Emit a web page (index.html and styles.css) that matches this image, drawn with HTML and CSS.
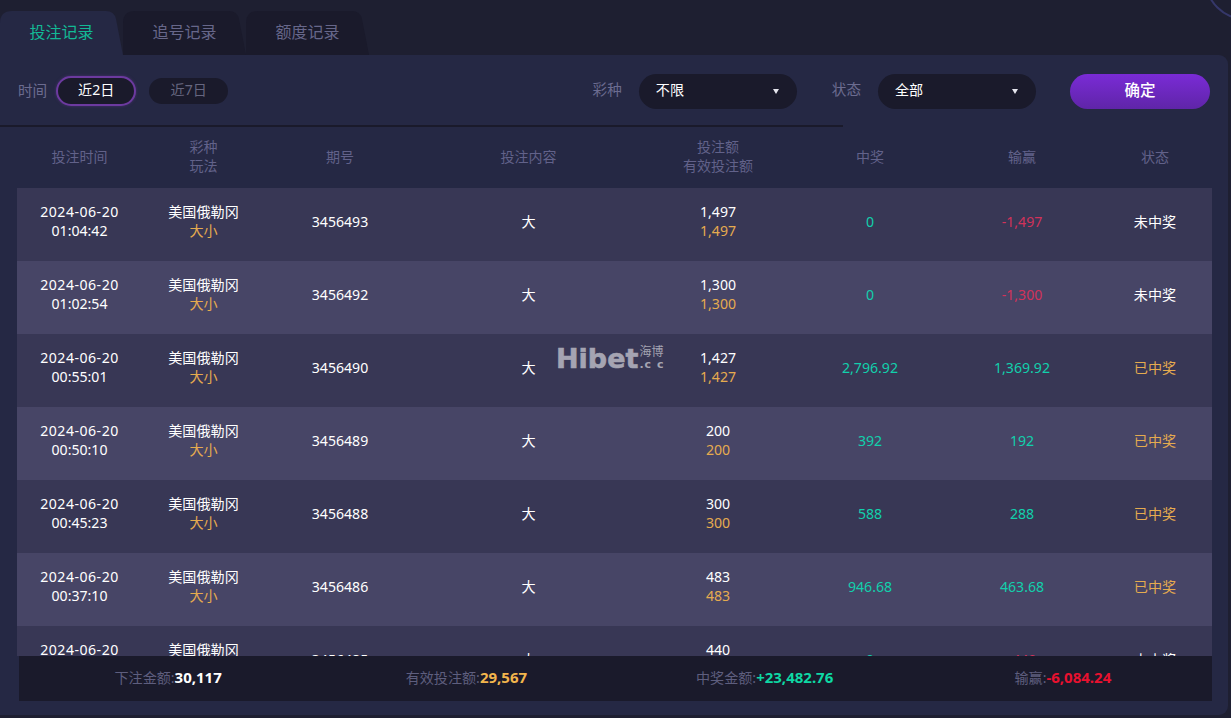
FILE: index.html
```html
<!DOCTYPE html>
<html lang="zh-CN">
<head>
<meta charset="utf-8">
<title>投注记录</title>
<link rel="stylesheet" href="styles.css">
</head>
<body>
<div class="arc"></div>
<nav class="tabs">
  <div class="tab active"><span>投注记录</span></div>
  <div class="tab"><span>追号记录</span></div>
  <div class="tab"><span>额度记录</span></div>
</nav>
<main class="panel">
  <div class="filters">
    <span class="label">时间</span>
    <span class="pill selected">近2日</span>
    <span class="pill">近7日</span>
    <div class="filters-right">
      <span class="label">彩种</span>
      <div class="select"><span>不限</span><i class="caret"></i></div>
      <span class="label label-status">状态</span>
      <div class="select"><span>全部</span><i class="caret"></i></div>
      <div class="confirm">确定</div>
    </div>
  </div>
  <div class="divider"></div>
  <div class="row head">
    <div>投注时间</div><div>彩种<br>玩法</div><div>期号</div><div>投注内容</div><div>投注额<br>有效投注额</div><div>中奖</div><div>输赢</div><div>状态</div>
  </div>
  <div class="body">
    <div class="row"><div><span class="date">2024-06-20</span><br>01:04:42</div><div>美国俄勒冈<br><em>大小</em></div><div>3456493</div><div>大</div><div>1,497<br><em>1,497</em></div><div class="green">0</div><div class="red">-1,497</div><div>未中奖</div></div>
    <div class="row"><div><span class="date">2024-06-20</span><br>01:02:54</div><div>美国俄勒冈<br><em>大小</em></div><div>3456492</div><div>大</div><div>1,300<br><em>1,300</em></div><div class="green">0</div><div class="red">-1,300</div><div>未中奖</div></div>
    <div class="row"><div><span class="date">2024-06-20</span><br>00:55:01</div><div>美国俄勒冈<br><em>大小</em></div><div>3456490</div><div>大</div><div>1,427<br><em>1,427</em></div><div class="green">2,796.92</div><div class="green">1,369.92</div><div class="amber">已中奖</div></div>
    <div class="row"><div><span class="date">2024-06-20</span><br>00:50:10</div><div>美国俄勒冈<br><em>大小</em></div><div>3456489</div><div>大</div><div>200<br><em>200</em></div><div class="green">392</div><div class="green">192</div><div class="amber">已中奖</div></div>
    <div class="row"><div><span class="date">2024-06-20</span><br>00:45:23</div><div>美国俄勒冈<br><em>大小</em></div><div>3456488</div><div>大</div><div>300<br><em>300</em></div><div class="green">588</div><div class="green">288</div><div class="amber">已中奖</div></div>
    <div class="row"><div><span class="date">2024-06-20</span><br>00:37:10</div><div>美国俄勒冈<br><em>大小</em></div><div>3456486</div><div>大</div><div>483<br><em>483</em></div><div class="green">946.68</div><div class="green">463.68</div><div class="amber">已中奖</div></div>
    <div class="row"><div><span class="date">2024-06-20</span><br>00:30:12</div><div>美国俄勒冈<br><em>大小</em></div><div>3456485</div><div>大</div><div>440<br><em>440</em></div><div class="green">0</div><div class="red">-440</div><div>未中奖</div></div>
  </div>
  <div class="summary">
    <div>下注金额:<b class="white">30,117</b></div>
    <div>有效投注额:<b class="gold">29,567</b></div>
    <div>中奖金额:<b class="mint">+23,482.76</b></div>
    <div>输赢:<b class="crimson">-6,084.24</b></div>
  </div>
</main>
<div class="watermark"><span class="wm-main">Hibet</span><span class="wm-side"><span class="wm-cn">海博</span><span class="wm-cc">.c c</span></span></div>
</body>
</html>
```
FILE: styles.css
```css
* { box-sizing: border-box; }
html, body { height: 100%; }
body {
  margin: 0;
  height: 718px;
  overflow: hidden;
  background: #1e1f31;
  color: #fff;
  font: 14.1px/19px "Noto Sans", "Noto Sans CJK SC", sans-serif;
  display: flex;
  flex-direction: column;
  padding-top: 11px;
}
.arc {
  position: absolute;
  left: 1205px;
  top: -60px;
  width: 80px;
  height: 80px;
  border: 2.5px solid #35376a;
  border-radius: 50%;
}
.tabs { display: flex; height: 44px; flex: none; }
.tab {
  width: 123px;
  height: 44px;
  background: #1a1a2b;
  color: #67678a;
  font-size: 16px;
  line-height: 42px;
  clip-path: path("M0 44 V12 Q0 0 12 0 H106 Q114 0 116 8 L123 44 Z");
}
.tab span { display: block; width: 123px; text-align: center; }
.tab.active { background: #252844; color: #13b995; }
.panel {
  width: 1228px;
  height: 660px;
  flex: none;
  background: #252844;
  border-radius: 0 9px 9px 0;
  display: flex;
  flex-direction: column;
}
.filters {
  height: 70px;
  flex: none;
  display: flex;
  align-items: center;
  padding: 0 18px 0 18px;
}
.label { color: #6c6c90; font-size: 14.6px; }
.pill {
  width: 79px;
  height: 26px;
  margin-left: 13px;
  border-radius: 13px;
  background: #1a1a2b;
  color: #66667f;
  text-align: center;
  line-height: 24px;
  position: relative;
  top: 1px;
}
.pill.selected {
  width: 80px;
  height: 30px;
  margin-left: 9px;
  line-height: 24px;
  border: 2px solid #6c3a9f;
  border-radius: 15px;
  color: #fff;
  box-shadow: 0 0 3px #6c3a9f80;
}
.filters-right { margin-left: auto; display: flex; align-items: center; padding-top: 3px; }
.filters-right .label { position: relative; top: -2px; }
.select {
  width: 158px;
  height: 35px;
  margin-left: 17px;
  padding: 0 18px 0 17px;
  border-radius: 18px;
  background: #1a1a2b;
  display: flex;
  align-items: center;
  justify-content: space-between;
  line-height: 30px;
}
.select span { position: relative; top: -2px; }
.caret {
  width: 0;
  height: 0;
  border: 3.5px solid transparent;
  border-top: 5px solid #e6e6ee;
  border-bottom: 0;
}
.label-status { margin-left: 35px; }
.confirm {
  width: 140px;
  height: 35px;
  margin-left: 34px;
  border-radius: 18px;
  background: linear-gradient(#7a2bd6, #5f25a8);
  text-align: center;
  line-height: 33px;
  font-size: 15.5px;
  font-weight: 500;
}
.divider { width: 843px; height: 2px; flex: none; background: #1a1a2b; }
.row {
  display: grid;
  grid-template-columns: 125px 123px 150px 227px 152px 152px 152px 114px;
  align-items: center;
  text-align: center;
  width: 1195px;
  margin-left: 17px;
  height: 73px;
  flex: none;
  padding-bottom: 7px;
  background: #383755;
}
.row:nth-child(even) { background: #474566; }
.date { letter-spacing: .5px; }
.row.head {
  height: 61px;
  padding-bottom: 3px;
  background: none;
  color: #62628a;
  font-size: 14px;
}
.body { height: 468px; flex: none; overflow: hidden; }
.row em { font-style: normal; color: #e5ab4f; }
.green { color: #12d0ac; }
.red { color: #d2325a; }
.amber { color: #e5ab4f; }
.summary {
  width: 1193px;
  height: 45px;
  margin-left: 19px;
  padding-bottom: 2px;
  flex: none;
  background: #1a1a2b;
  display: grid;
  grid-template-columns: repeat(4, 1fr);
  align-items: center;
  text-align: center;
  color: #5e5e7e;
}
.summary b { font-weight: 700; font-size: 15px; }
.white { color: #fff; }
.gold { color: #f2b54d; }
.mint { color: #0ed8a4; }
.crimson { color: #e8112f; }
.watermark {
  position: absolute;
  left: 556px;
  top: 344px;
  display: flex;
  color: #a5a4b2;
}
.wm-main {
  font: 700 27px/30px "DejaVu Sans", sans-serif;
  -webkit-text-stroke: .6px #a5a4b2;
}
.wm-side { display: flex; flex-direction: column; margin-left: 1px; }
.wm-cn { font-size: 12px; line-height: 15px; }
.wm-cc { font: 700 11px/12px "DejaVu Sans", sans-serif; letter-spacing: 1px; }
```
